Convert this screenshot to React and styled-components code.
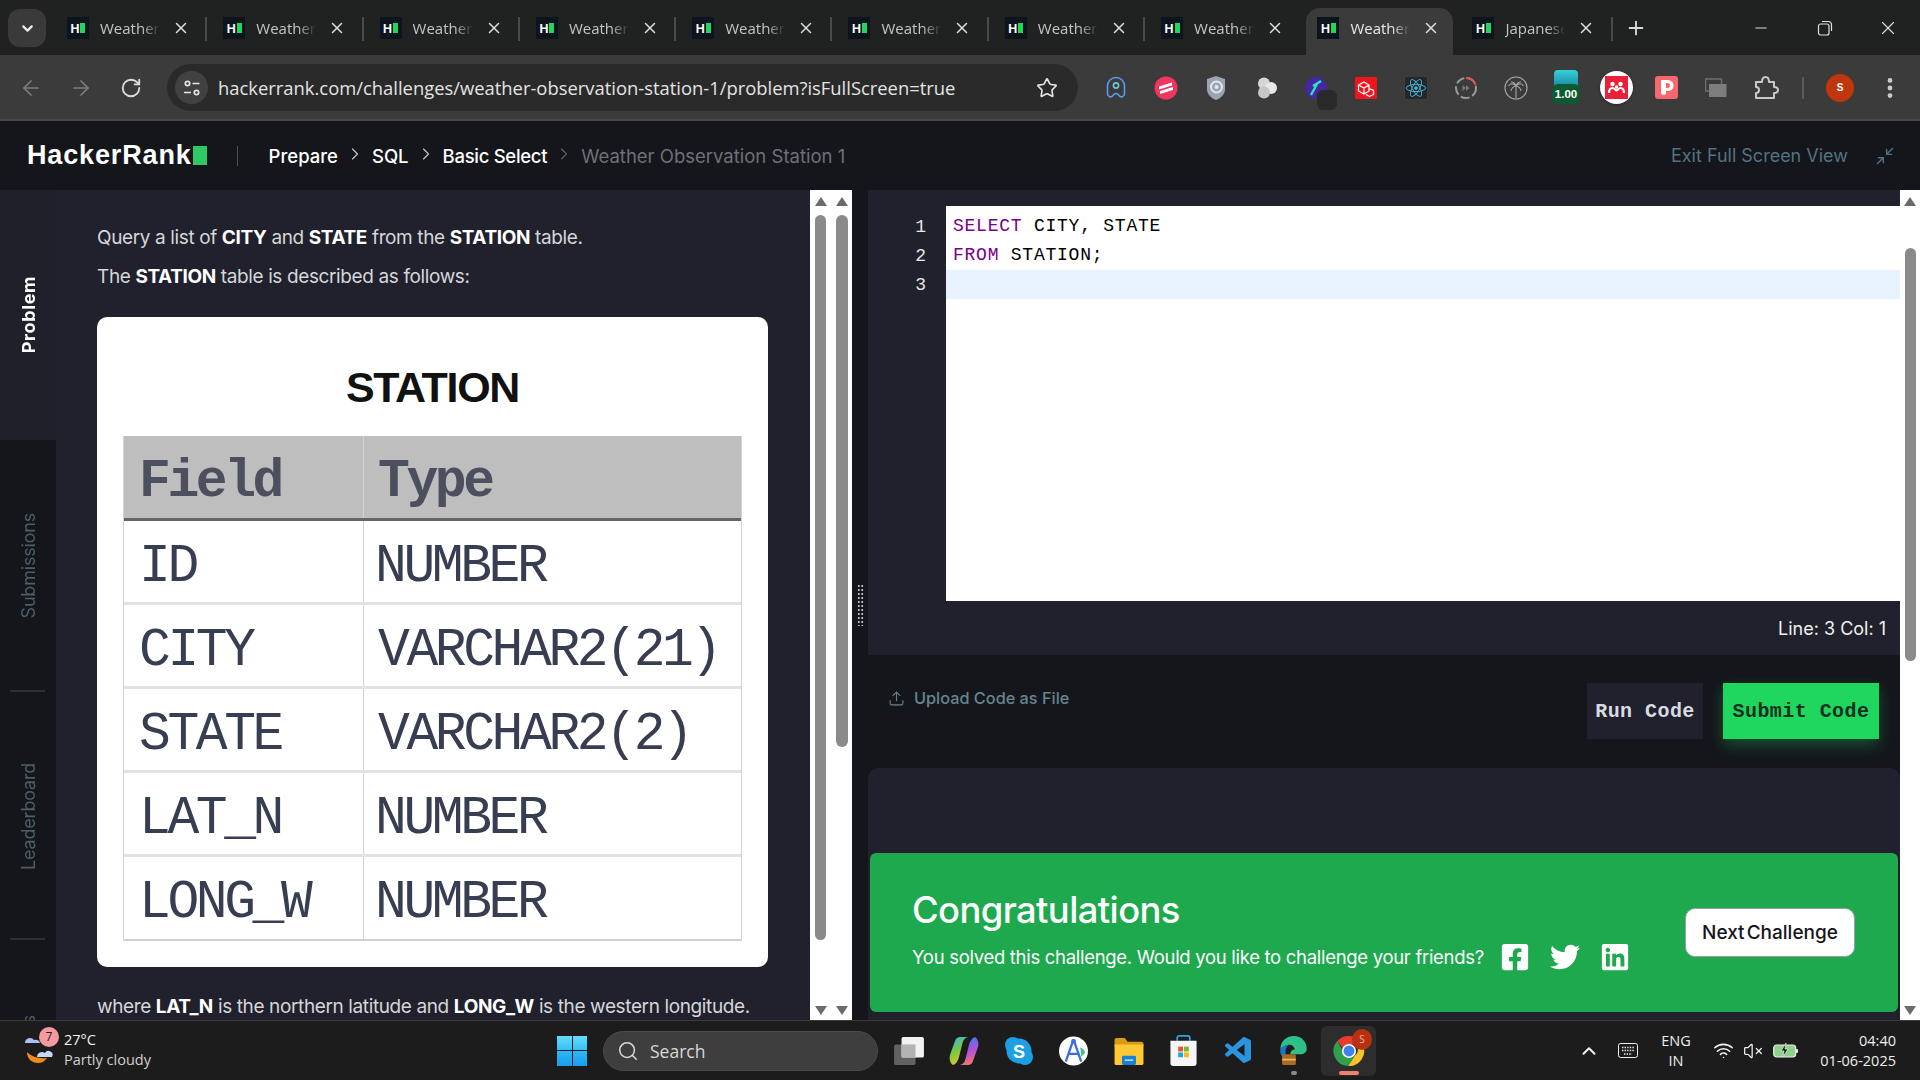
import React from 'react';
import styled, { createGlobalStyle } from 'styled-components';
import {
  ArrowLeft, ArrowRight, RotateCw, Star, X, Minus, Plus, ChevronDown, ChevronUp,
  ChevronRight, EllipsisVertical, Upload, Minimize2, Search as SearchIcon,
  Wifi, VolumeX,
} from 'lucide-react';
import { FaFacebookSquare, FaTwitter, FaLinkedin, FaReact } from 'react-icons/fa';
import { VscVscode } from 'react-icons/vsc';

const UI_FONT = '"Open Sans", "Noto Sans", sans-serif';
const PAGE_FONT = 'Inter, "Liberation Sans", sans-serif';
const MONO_FONT = '"Liberation Mono", "DejaVu Sans Mono", monospace';

const GlobalStyle = createGlobalStyle`
  html, body { margin: 0; padding: 0; background: #14161b; overflow: hidden; }
  * { box-sizing: border-box; }
`;

const Screen = styled.div`
  width: 1920px;
  height: 1080px;
  display: flex;
  flex-direction: column;
  overflow: hidden;
  font-family: ${PAGE_FONT};
`;

/* chrome tab strip */
const TabStrip = styled.div`
  height: 55px;
  flex: none;
  display: flex;
  align-items: flex-end;
  background: #202221;
  font-family: ${UI_FONT};
  color: #c9c9c9;
`;
const TabMenu = styled.div`
  width: 38px;
  height: 38px;
  margin: 9px 5px 0 8px;
  align-self: flex-start;
  border-radius: 12px;
  background: #3a3a3a;
  color: #eee;
  display: flex;
  align-items: center;
  justify-content: center;
`;
const Tab = styled.div`
  position: relative;
  width: ${(p) => p.$w}px;
  height: 47px;
  padding: 0 0 7px ${(p) => p.$pad}px;
  margin-right: ${(p) => p.$gap || 0}px;
  display: flex;
  align-items: center;
  flex: none;
  border-radius: 14px 14px 0 0;
  background: ${(p) => (p.$active ? '#3b3b3b' : 'transparent')};
  color: ${(p) => (p.$active ? '#e8e8e8' : '#c4c4c4')};
  &::after {
    content: '';
    display: ${(p) => (p.$sep ? 'block' : 'none')};
    position: absolute;
    right: 0;
    top: 9px;
    width: 2px;
    height: 24px;
    background: #4a4a4a;
  }
`;
const Favicon = styled.span`
  width: 22px;
  height: 22px;
  flex: none;
  background: #0e141e;
  display: flex;
  align-items: center;
  justify-content: center;
  gap: 1px;
  color: #fff;
  font: 700 12px ${PAGE_FONT};
`;
const FaviconBar = styled.i`
  width: 5px;
  height: 10px;
  background: #1ed760;
`;
const TabTitle = styled.span`
  width: 60px;
  margin-left: 11px;
  font-size: 15px;
  white-space: nowrap;
  overflow: hidden;
  -webkit-mask-image: linear-gradient(90deg, #000 70%, transparent 100%);
  mask-image: linear-gradient(90deg, #000 70%, transparent 100%);
`;
const TabClose = styled.span`
  margin-left: 12px;
  display: flex;
  color: #ddd;
`;
const NewTab = styled.div`
  margin-left: 12px;
  height: 47px;
  padding-bottom: 7px;
  display: flex;
  align-items: center;
  color: #ddd;
`;
const WindowControls = styled.div`
  margin-left: auto;
  height: 47px;
  padding-bottom: 7px;
  display: flex;
  align-items: center;
  color: #e0e0e0;
`;
const WindowButton = styled.div`
  width: 63.5px;
  display: flex;
  justify-content: center;
`;

/* chrome toolbar */
const Toolbar = styled.div`
  height: 66px;
  flex: none;
  display: flex;
  align-items: center;
  padding: 1px 0 0 6px;
  background: #3b3b3b;
  border-bottom: 2px solid #484848;
  font-family: ${UI_FONT};
`;
const NavButton = styled.div`
  width: 50px;
  display: flex;
  justify-content: center;
  color: ${(p) => (p.$on ? '#dcdcdc' : '#7c7c7c')};
`;
const AddressBar = styled.div`
  width: 911px;
  height: 47px;
  margin-left: 11px;
  padding: 0 20px 0 8px;
  display: flex;
  align-items: center;
  border-radius: 24px;
  background: #2a2a2a;
  color: #e4e4e4;
`;
const SiteButton = styled.div`
  width: 33px;
  height: 33px;
  border-radius: 50%;
  background: #414141;
  display: flex;
  align-items: center;
  justify-content: center;
  flex: none;
`;
const Url = styled.div`
  margin-left: 10px;
  font-size: 18.4px;
  white-space: nowrap;
  flex: 1;
`;
const Extensions = styled.div`
  margin-left: 13px;
  display: flex;
  align-items: center;
`;
const ExtSlot = styled.div`
  position: relative;
  width: 50px;
  height: 44px;
  display: flex;
  align-items: center;
  justify-content: center;
  flex: none;
`;
const ExtPatch = styled.span`
  position: absolute;
  left: 26px;
  top: 24px;
  width: 20px;
  height: 20px;
  border-radius: 6px;
  background: #2a2a2a;
`;
const RateBadge = styled.span`
  position: absolute;
  left: 11px;
  top: 18px;
  width: 28px;
  height: 20px;
  border-radius: 6px;
  background: #0d5a30;
  color: #fff;
  font: 700 11.5px/20px "Liberation Sans", sans-serif;
  text-align: center;
`;
const RateTop = styled.span`
  position: absolute;
  left: 13px;
  top: 4px;
  width: 24px;
  height: 16px;
  border-radius: 4px 4px 0 0;
  background: linear-gradient(#35d0d8, #1b8fa8);
`;
const Mendeley = styled.span`
  width: 33px;
  height: 33px;
  border-radius: 50%;
  background: #fff;
  box-shadow: 0 1px 3px rgba(0, 0, 0, 0.4);
  display: flex;
  align-items: center;
  justify-content: center;
`;
const ToolSep = styled.div`
  width: 2px;
  height: 22px;
  margin: 0 10px 0 11px;
  background: #5b5b5b;
`;
const Avatar = styled.div`
  width: 28px;
  height: 28px;
  margin: 0 8px 0 12px;
  border-radius: 50%;
  background: #bf360c;
  color: #fff;
  font: 700 10px/28px "Liberation Sans", sans-serif;
  text-align: center;
`;
const MoreButton = styled.div`
  margin-left: 15px;
  display: flex;
  color: #cfcfcf;
`;

/* hackerrank header */
const Header = styled.header`
  height: 69px;
  flex: none;
  display: flex;
  align-items: center;
  padding: 0 25px 0 27px;
  background: #14161b;
`;
const Logo = styled.div`
  display: flex;
  align-items: center;
  color: #fff;
  font: 700 27px "Liberation Sans", sans-serif;
  letter-spacing: 0.85px;
`;
const LogoBlock = styled.i`
  width: 14px;
  height: 19px;
  margin-left: 1px;
  background: #2ec866;
`;
const HeaderSep = styled.div`
  width: 1px;
  height: 20px;
  margin: 0 31px 0 30px;
  background: #4a4f57;
`;
const Crumbs = styled.nav`
  display: flex;
  align-items: center;
  font-size: 18.5px;
  color: #fff;
`;
const Crumb = styled.span`
  color: ${(p) => (p.$current ? '#6d7278' : '#fff')};
  font-weight: ${(p) => (p.$current ? 400 : 500)};
  letter-spacing: ${(p) => (p.$tight ? '-0.3px' : '0')};
`;
const CrumbArrow = styled.span`
  display: flex;
  width: 34px;
  justify-content: center;
  color: ${(p) => (p.$dim ? '#5d6268' : '#ccc')};
  margin-top: -3px;
`;
const ExitFull = styled.div`
  margin-left: auto;
  display: flex;
  align-items: center;
  gap: 27px;
  color: #537282;
  font-size: 18px;
`;

/* main area */
const Main = styled.main`
  flex: 1;
  min-height: 0;
  display: flex;
  overflow: hidden;
`;
const Sidebar = styled.aside`
  width: 56px;
  flex: none;
  background: #14161b;
  display: flex;
  flex-direction: column;
`;
const SideTab = styled.div`
  height: ${(p) => p.$h}px;
  flex: none;
  position: relative;
  display: flex;
  align-items: center;
  justify-content: center;
  background: ${(p) => (p.$active ? '#1f2029' : 'transparent')};
  &::after {
    content: '';
    position: absolute;
    left: 10px;
    bottom: 0;
    width: 35px;
    height: 2px;
    background: ${(p) => (p.$active ? 'transparent' : '#2b2f36')};
  }
`;
const SideLabel = styled.span`
  writing-mode: vertical-rl;
  transform: rotate(180deg);
  font-family: Inter, sans-serif;
  font-size: 18px;
  letter-spacing: ${(p) => (p.$active ? '0.6px' : '-0.2px')};
  white-space: nowrap;
  font-weight: ${(p) => (p.$active ? 700 : 400)};
  color: ${(p) => (p.$active ? '#fff' : '#4c5e66')};
`;
const Problem = styled.section`
  width: 754px;
  flex: none;
  padding: 36px 42px 0 41px;
  background: #20212c;
  color: #d5d6da;
  overflow: hidden;
  font-size: 19px;
  letter-spacing: -0.38px;
`;
const Para = styled.p`
  margin: 0 0 ${(p) => p.$gap}px;
  line-height: 24px;
  white-space: nowrap;
  b { color: #fff; font-weight: 700; }
`;
const ImageCard = styled.div`
  width: 671px;
  height: 650px;
  margin-bottom: 28px;
  padding: 0 26px;
  border-radius: 10px;
  background: #fff;
`;
const CardTitle = styled.div`
  height: 119px;
  padding-top: 44px;
  text-align: center;
  color: #111;
  font: 700 43px/52px "Liberation Sans", sans-serif;
  letter-spacing: -1.3px;
`;
const SchemaTable = styled.div`
  width: 619px;
  border-left: 1px solid #d4d4d4;
  border-right: 1px solid #d4d4d4;
  filter: blur(0.45px);
`;
const SchemaRow = styled.div`
  height: ${(p) => (p.$head ? 85 : 84)}px;
  display: grid;
  grid-template-columns: 240px 1fr;
  background: ${(p) => (p.$head ? '#bdbebd' : '#fff')};
  border-bottom: ${(p) => (p.$head ? '3px solid #666' : '3px solid #e2e2e2')};
  color: ${(p) => (p.$head ? '#4c505e' : '#383e52')};
  font-family: ${MONO_FONT};
  font-weight: ${(p) => (p.$head ? 700 : 400)};
  font-size: 53px;
  &:last-child { border-bottom-width: 2px; border-bottom-color: #d0d0d0; }
`;
const SchemaCell = styled.div`
  display: flex;
  align-items: center;
  padding: 10px 0 0 ${(p) => p.$pad}px;
  border-right: ${(p) => (p.$first ? '1px solid #d4d4d4' : '0')};
  letter-spacing: -3.4px;
  white-space: nowrap;
`;

/* scrollbars */
const ScrollPair = styled.div`
  width: 42px;
  flex: none;
  display: flex;
  background: #fff;
`;
const ScrollBar = styled.div`
  width: ${(p) => p.$w}px;
  flex: none;
  display: flex;
  flex-direction: column;
  align-items: center;
  background: #fff;
`;
const Arrow = styled.i`
  width: 0;
  height: 0;
  flex: none;
  border-left: 6px solid transparent;
  border-right: 6px solid transparent;
  ${(p) => (p.$down
    ? 'border-top: 9px solid #6a6a6a; margin: auto 0 5px;'
    : 'border-bottom: 9px solid #6a6a6a; margin-top: 7px;')}
`;
const Thumb = styled.div`
  width: ${(p) => p.$w}px;
  height: ${(p) => p.$h}px;
  margin-top: ${(p) => p.$top}px;
  border-radius: 6px;
  background: #8a8a8a;
  flex: none;
`;
const Splitter = styled.div`
  width: 16px;
  flex: none;
  background: #14161b;
  display: flex;
  align-items: center;
  justify-content: center;
`;
const Grip = styled.div`
  width: 7px;
  height: 42px;
  background-image: radial-gradient(circle, #bdbdbd 1.1px, transparent 1.3px);
  background-size: 3.5px 4px;
`;

/* right column */
const Workspace = styled.section`
  width: 1032px;
  flex: none;
  display: flex;
  flex-direction: column;
  background: #14161b;
`;
const EditorPanel = styled.div`
  height: 465px;
  flex: none;
  padding-top: 16px;
  background: #20212c;
`;
const EditorFrame = styled.div`
  height: 395px;
  display: flex;
`;
const Gutter = styled.div`
  width: 78px;
  flex: none;
  padding: 7px 20px 0 0;
  text-align: right;
  color: #e8e8e8;
  font: 400 18px/29.2px ${MONO_FONT};
`;
const Code = styled.div`
  flex: 1;
  padding-top: 5px;
  background: #fff;
  color: #000;
  font: 400 18px/31px ${MONO_FONT};
  letter-spacing: 0.76px;
`;
const CodeLine = styled.div`
  height: 29.3px;
  padding-left: 7px;
  white-space: pre;
  background: ${(p) => (p.$current ? '#e8f2ff' : 'transparent')};
`;
const Keyword = styled.span`
  color: #770088;
`;
const StatusLine = styled.div`
  height: 54px;
  padding: 0 14px 0 0;
  display: flex;
  align-items: center;
  justify-content: flex-end;
  color: #f0f0f0;
  font-size: 18px;
`;
const ActionBar = styled.div`
  height: 113px;
  flex: none;
  padding: 28px 21px 0 20px;
  display: flex;
  align-items: flex-start;
`;
const UploadLink = styled.div`
  display: flex;
  align-items: center;
  gap: 9px;
  height: 30px;
  color: #66858f;
  font-size: 16.3px;
  font-weight: 500;
`;
const CodeButton = styled.button`
  width: ${(p) => (p.$primary ? '156px' : '116px')};
  height: 56px;
  margin-left: ${(p) => (p.$primary ? '20px' : 'auto')};
  padding: 0;
  border: 0;
  background: ${(p) => (p.$primary ? '#1fd65f' : '#20212c')};
  color: ${(p) => (p.$primary ? '#16301f' : '#d8dbe2')};
  box-shadow: ${(p) => (p.$primary ? '0 6px 14px rgba(31, 214, 95, 0.3)' : 'none')};
  font: 700 20px ${MONO_FONT};
  letter-spacing: 0.45px;
`;
const ResultPanel = styled.div`
  flex: 1;
  padding: 85px 2px 8px 2px;
  border-radius: 10px 10px 0 0;
  background: #20212c;
`;
const SuccessCard = styled.div`
  height: 159px;
  padding: 0 43px 0 42px;
  display: flex;
  align-items: center;
  justify-content: space-between;
  border-radius: 6px;
  background: #1ea94e;
  color: #fff;
`;
const SuccessText = styled.div`
  padding-bottom: 5px;
`;
const SuccessTitle = styled.h2`
  margin: 0 0 10px;
  font-size: 36.4px;
  line-height: 44px;
  font-weight: 500;
  letter-spacing: -0.6px;
`;
const ShareRow = styled.div`
  display: flex;
  align-items: center;
  font-size: 18.5px;
  letter-spacing: -0.3px;
`;
const ShareIcons = styled.span`
  display: flex;
  align-items: center;
  gap: 20px;
  margin-left: 16px;
  font-size: 30px;
`;
const NextButton = styled.button`
  width: 170px;
  height: 49px;
  border: 1px solid #9aa0a6;
  border-radius: 10px;
  background: #fff;
  color: #14161b;
  font: 500 19px ${PAGE_FONT};
  word-spacing: -3px;
`;
const PageScroll = styled.div`
  width: 20px;
  flex: none;
  background: #fff;
  display: flex;
  flex-direction: column;
  align-items: center;
`;

/* windows taskbar */
const Taskbar = styled.footer`
  height: 60px;
  flex: none;
  display: flex;
  align-items: center;
  background: #1c1c1c;
  border-top: 1px solid #3b3b3b;
  font-family: ${UI_FONT};
  color: #eee;
`;
const Weather = styled.div`
  width: 557px;
  flex: none;
  padding: 0 0 2px 25px;
  display: flex;
  align-items: center;
  gap: 9px;
`;
const WeatherIcon = styled.div`
  position: relative;
  width: 30px;
  height: 40px;
  margin-top: 4px;
`;
const WeatherBadge = styled.span`
  position: absolute;
  left: 14px;
  top: -5px;
  width: 20px;
  height: 20px;
  border-radius: 50%;
  background: #f59a9e;
  color: #222;
  font-size: 12px;
  line-height: 20px;
  text-align: center;
`;
const WeatherText = styled.div`
  font-size: 14.5px;
  line-height: 20px;
  white-space: nowrap;
  color: #d0d0d0;
`;
const Temp = styled.div`
  color: #f2f2f2;
`;
const StartLogo = styled.div`
  width: 30px;
  height: 30px;
  flex: none;
  display: grid;
  grid-template-columns: 1fr 1fr;
  gap: 1px;
`;
const StartPane = styled.i`
  background: ${(p) => (p.$low ? 'linear-gradient(#2db7f5, #1a9df0)' : 'linear-gradient(#66dcfb, #35bff5)')};
`;
const SearchBox = styled.div`
  width: 275px;
  height: 40px;
  margin-left: 16px;
  padding-left: 13px;
  flex: none;
  display: flex;
  align-items: center;
  gap: 11px;
  border-radius: 20px;
  background: #3e3e3e;
  border: 1px solid #4a4a4a;
  color: #d8d8d8;
  font-size: 17.5px;
`;
const AppIcons = styled.div`
  margin-left: 3px;
  display: flex;
`;
const AppSlot = styled.div`
  position: relative;
  width: 55px;
  height: 50px;
  display: flex;
  align-items: center;
  justify-content: center;
  border-radius: 6px;
  background: ${(p) => (p.$active ? '#2d2d2d' : 'transparent')};
`;
const RunningMark = styled.i`
  position: absolute;
  left: 50%;
  bottom: 1px;
  height: 4px;
  width: ${(p) => (p.$active ? '20px' : '6px')};
  margin-left: ${(p) => (p.$active ? '-10px' : '-3px')};
  border-radius: 2px;
  background: ${(p) => (p.$active ? '#f08070' : '#8b8b8b')};
`;
const AppBadge = styled.span`
  position: absolute;
  left: 31px;
  top: 3px;
  width: 20px;
  height: 21px;
  border-radius: 50%;
  background: #b7300f;
  color: #f5b5a5;
  font-size: 10px;
  line-height: 21px;
  text-align: center;
`;
const Tray = styled.div`
  margin-left: auto;
  padding-right: 24px;
  display: flex;
  align-items: center;
`;
const TrayIcon = styled.span`
  width: ${(p) => p.$w}px;
  display: flex;
  justify-content: center;
  flex: none;
  color: #f0f0f0;
  svg { flex: none; }
`;
const TrayText = styled.div`
  width: ${(p) => p.$w}px;
  flex: none;
  font-size: 14.5px;
  line-height: 20px;
  text-align: ${(p) => p.$align};
`;

function HackerFavicon() {
  return <Favicon>H<FaviconBar /></Favicon>;
}

function ChromeTab({ title, ...rest }) {
  return (
    <Tab {...rest}>
      <HackerFavicon />
      <TabTitle>{title}</TabTitle>
      <TabClose><X size={18} /></TabClose>
    </Tab>
  );
}

function ChromeTabs() {
  return (
    <TabStrip>
      <TabMenu><ChevronDown size={17} strokeWidth={3} /></TabMenu>
      {Array.from({ length: 8 }, (_, i) => (
        <ChromeTab key={i} title="Weather" $w={156.3} $pad={16} $sep={i < 7} $gap={i === 7 ? 5 : 0} />
      ))}
      <ChromeTab title="Weather" $w={147} $pad={11} $active />
      <ChromeTab title="Japanese" $w={159.5} $pad={19} $sep />
      <NewTab><Plus size={22} /></NewTab>
      <WindowControls>
        <WindowButton><Minus size={18} strokeWidth={1.3} /></WindowButton>
        <WindowButton>
          <svg width="18" height="18" viewBox="0 0 18 18" fill="none" stroke="currentColor" strokeWidth="1.2">
            <rect x="2.5" y="5" width="10.5" height="11" rx="2" />
            <path d="M6 2.5h6.5a3 3 0 0 1 3 3V12" />
          </svg>
        </WindowButton>
        <WindowButton><X size={22} strokeWidth={1.2} /></WindowButton>
      </WindowControls>
    </TabStrip>
  );
}

function SiteIcon() {
  return (
    <svg width="18" height="18" viewBox="0 0 18 18" fill="none" stroke="#e4e4e4" strokeWidth="1.7">
      <circle cx="4.5" cy="4.5" r="2.2" />
      <path d="M9.5 4.5h7M1 13.5h7" />
      <circle cx="13.5" cy="13.5" r="2.2" />
    </svg>
  );
}

function ExtensionIcons() {
  return (
    <Extensions>
      <ExtSlot>
        <svg width="20" height="24" viewBox="0 0 20 24" fill="none" stroke="#5b9bea" strokeWidth="1.6">
          <path d="M1.5 18V10a8.5 8.5 0 0 1 17 0v8a3 3 0 0 1-5.5 1.5c-.8-1.3-1.6-2-3-2s-2.2.7-3 2A3 3 0 0 1 1.5 18z" />
          <circle cx="10" cy="9.5" r="2.6" stroke="#6fc3d8" />
        </svg>
      </ExtSlot>
      <ExtSlot>
        <svg width="24" height="24" viewBox="0 0 24 24">
          <circle cx="12" cy="12" r="11.5" fill="#f0365f" />
          <path d="M5 10.5 18 6.5v3L5 13.5zM6 15l13-4v3L6 18z" fill="#fff" />
        </svg>
      </ExtSlot>
      <ExtSlot>
        <svg width="20" height="26" viewBox="0 0 20 26">
          <path d="M10 1 19 4v10c0 5.5-4 9-9 11-5-2-9-5.5-9-11V4z" fill="#9aa3b2" />
          <circle cx="10.5" cy="12" r="5.5" fill="none" stroke="#e4e8ee" strokeWidth="2" />
          <circle cx="10.5" cy="12" r="2" fill="#e4e8ee" />
        </svg>
      </ExtSlot>
      <ExtSlot>
        <svg width="22" height="22" viewBox="0 0 22 22">
          <circle cx="9" cy="6.5" r="6" fill="#d6d6d6" />
          <circle cx="16" cy="11" r="6" fill="#e8e8e8" />
          <circle cx="9" cy="15.5" r="6" fill="#c6c6c6" />
        </svg>
      </ExtSlot>
      <ExtSlot>
        <svg width="22" height="22" viewBox="0 0 22 22">
          <circle cx="11" cy="11" r="11" fill="#4527a0" />
          <path d="M6 18 12 7M8 9l8-5" stroke="#2fe0c8" strokeWidth="2.4" fill="none" />
        </svg>
        <ExtPatch />
      </ExtSlot>
      <ExtSlot>
        <svg width="22" height="22" viewBox="0 0 22 22">
          <rect width="22" height="22" rx="2" fill="#f0141e" />
          <path d="M3.5 8 9 5l5 3v6l-5 3-5.5-3zM3.5 8 9 11l5-3M9 11v6M14 11.5l4.5 2v4l-4 2-3.5-2" fill="none" stroke="#fff" strokeWidth="1.2" />
        </svg>
      </ExtSlot>
      <ExtSlot>
        <svg width="22" height="22" viewBox="0 0 22 22"><rect width="22" height="22" rx="1" fill="#23272a" /></svg>
        <FaReact size={20} color="#4db6d8" style={{ position: 'absolute' }} />
      </ExtSlot>
      <ExtSlot>
        <svg width="22" height="22" viewBox="0 0 22 22" fill="none" strokeWidth="2">
          <circle cx="11" cy="11" r="10" stroke="#9a9a9a" strokeDasharray="9 3" />
          <path d="M11 1a10 10 0 0 1 9.5 7" stroke="#e2504c" />
          <path d="M7.5 8v6l3.5-3zM11 8v6l3.5-3z" fill="#777" stroke="none" />
        </svg>
      </ExtSlot>
      <ExtSlot>
        <svg width="24" height="24" viewBox="0 0 24 24" fill="none" stroke="#a8a8a8" strokeWidth="1.1">
          <circle cx="12" cy="12" r="11" />
          <path d="M12 11v11M12 10C9 7 6 7 4.5 10M12 10c3-3 6-3 7.5 0M12 10c-2.5.5-4.5 2-5 5M12 10c2.5.5 4.5 2 5 5M12 10c-1-3-3-4-5-4M12 10c1-3 3-4 5-4" />
        </svg>
      </ExtSlot>
      <ExtSlot>
        <RateTop />
        <RateBadge>1.00</RateBadge>
      </ExtSlot>
      <ExtSlot>
        <Mendeley>
          <svg width="23" height="23" viewBox="0 0 23 23">
            <rect width="23" height="23" fill="#e8203a" />
            <circle cx="7.5" cy="8" r="2.2" fill="#fff" />
            <circle cx="15.5" cy="8" r="2.2" fill="#fff" />
            <circle cx="11.5" cy="11" r="1.7" fill="#fff" />
            <path d="M4 17c0-3 1-5 3.5-5 2 0 3 2.5 4 2.5s2-2.5 4-2.5c2.5 0 3.5 2 3.5 5" fill="none" stroke="#fff" strokeWidth="2.2" />
          </svg>
        </Mendeley>
      </ExtSlot>
      <ExtSlot>
        <svg width="23" height="23" viewBox="0 0 23 23">
          <rect width="23" height="23" rx="3" fill="#f8676e" />
          <path d="M6 4h7a5 5 0 0 1 0 11h-2v3l-2 1-3-1zM11 7v5h1.5a2.5 2.5 0 0 0 0-5z" fill="#fff" fillRule="evenodd" />
        </svg>
      </ExtSlot>
      <ExtSlot>
        <svg width="22" height="20" viewBox="0 0 22 20">
          <rect x="0.5" y="1" width="16" height="12" fill="none" stroke="#6f6f6f" strokeWidth="1.5" />
          <rect x="4" y="6" width="17.5" height="13" fill="#7d7d7d" />
        </svg>
      </ExtSlot>
      <ExtSlot>
        <svg width="26" height="26" viewBox="0 0 26 26" fill="none" stroke="#c9c9c9" strokeWidth="2" strokeLinejoin="round">
          <path d="M3 7h6c0-3 1-5 3.5-5S16 4 16 7h5v5c2.5 0 4 1 4 3s-1.5 3-4 3v5H3v-5c2 0 3-1 3-3s-1-3-3-3z" />
        </svg>
      </ExtSlot>
      <ToolSep />
      <Avatar>S</Avatar>
      <MoreButton><EllipsisVertical size={26} strokeWidth={2.4} /></MoreButton>
    </Extensions>
  );
}

function BrowserToolbar() {
  return (
    <Toolbar>
      <NavButton><ArrowLeft size={24} strokeWidth={1.7} /></NavButton>
      <NavButton><ArrowRight size={24} strokeWidth={1.7} /></NavButton>
      <NavButton $on><RotateCw size={22} strokeWidth={2} /></NavButton>
      <AddressBar>
        <SiteButton><SiteIcon /></SiteButton>
        <Url>hackerrank.com/challenges/weather-observation-station-1/problem?isFullScreen=true</Url>
        <Star size={22} strokeWidth={1.8} />
      </AddressBar>
      <ExtensionIcons />
    </Toolbar>
  );
}

function PageHeader() {
  return (
    <Header>
      <Logo>HackerRank<LogoBlock /></Logo>
      <HeaderSep />
      <Crumbs>
        <Crumb>Prepare</Crumb>
        <CrumbArrow><ChevronRight size={20} strokeWidth={1.3} /></CrumbArrow>
        <Crumb>SQL</Crumb>
        <CrumbArrow><ChevronRight size={20} strokeWidth={1.3} /></CrumbArrow>
        <Crumb $tight>Basic Select</Crumb>
        <CrumbArrow $dim><ChevronRight size={20} strokeWidth={1.3} /></CrumbArrow>
        <Crumb $current>Weather Observation Station 1</Crumb>
      </Crumbs>
      <ExitFull>
        Exit Full Screen View
        <Minimize2 size={20} strokeWidth={1.7} />
      </ExitFull>
    </Header>
  );
}

const schema = [
  ['ID', 'NUMBER', 11],
  ['CITY', 'VARCHAR2(21)', 14],
  ['STATE', 'VARCHAR2(2)', 14],
  ['LAT_N', 'NUMBER', 11],
  ['LONG_W', 'NUMBER', 11],
];

function ProblemStatement() {
  return (
    <Problem>
      <Para $gap={15}>Query a list of <b>CITY</b> and <b>STATE</b> from the <b>STATION</b> table.</Para>
      <Para $gap={28}>The <b>STATION</b> table is described as follows:</Para>
      <ImageCard>
        <CardTitle>STATION</CardTitle>
        <SchemaTable>
          <SchemaRow $head>
            <SchemaCell $first $pad={15}>Field</SchemaCell>
            <SchemaCell $pad={14}>Type</SchemaCell>
          </SchemaRow>
          {schema.map(([field, type, pad]) => (
            <SchemaRow key={field}>
              <SchemaCell $first $pad={15}>{field}</SchemaCell>
              <SchemaCell $pad={pad}>{type}</SchemaCell>
            </SchemaRow>
          ))}
        </SchemaTable>
      </ImageCard>
      <Para $gap={0}>where <b>LAT_N</b> is the northern latitude and <b>LONG_W</b> is the western longitude.</Para>
    </Problem>
  );
}

function EditorArea() {
  return (
    <Workspace>
      <EditorPanel>
        <EditorFrame>
          <Gutter>1<br />2<br />3</Gutter>
          <Code>
            <CodeLine><Keyword>SELECT</Keyword> CITY, STATE</CodeLine>
            <CodeLine><Keyword>FROM</Keyword> STATION;</CodeLine>
            <CodeLine $current />
          </Code>
        </EditorFrame>
        <StatusLine>Line: 3 Col: 1</StatusLine>
      </EditorPanel>
      <ActionBar>
        <UploadLink><Upload size={17} strokeWidth={1.5} />Upload Code as File</UploadLink>
        <CodeButton>Run Code</CodeButton>
        <CodeButton $primary>Submit Code</CodeButton>
      </ActionBar>
      <ResultPanel>
        <SuccessCard>
          <SuccessText>
            <SuccessTitle>Congratulations</SuccessTitle>
            <ShareRow>
              You solved this challenge. Would you like to challenge your friends?
              <ShareIcons><FaFacebookSquare /><FaTwitter /><FaLinkedin /></ShareIcons>
            </ShareRow>
          </SuccessText>
          <NextButton>Next Challenge</NextButton>
        </SuccessCard>
      </ResultPanel>
    </Workspace>
  );
}

function ChromeIcon() {
  return (
    <svg width="32" height="32" viewBox="0 0 34 34">
      <path d="M17 1a16 16 0 0 1 14.5 9H17a7 7 0 0 0-6.5 4L4.5 6.5A16 16 0 0 1 17 1z" fill="#e53d30" />
      <path d="M31.5 10A16 16 0 0 1 16 33l7-11a7 7 0 0 0 0-12z" fill="#f9c227" />
      <path d="M4.5 6.5l6.500 11A7 7 0 0 0 23 22l-7 11A16 16 0 0 1 4.5 6.5z" fill="#2fa04c" />
      <circle cx="17" cy="17" r="7.5" fill="#fff" />
      <circle cx="17" cy="17" r="5.8" fill="#3c82e8" />
    </svg>
  );
}

function TaskbarApps() {
  return (
    <AppIcons>
      <AppSlot>
        <svg width="30" height="28" viewBox="0 0 32 30">
          <rect y="8" width="23" height="22" rx="2" fill="#616161" />
          <rect x="8" width="24" height="22" rx="2" fill="#f2f2f2" />
          <rect x="8" y="8" width="15" height="14" fill="#b3b3b3" />
        </svg>
      </AppSlot>
      <AppSlot>
        <svg width="30" height="30" viewBox="0 0 30 30">
          <defs>
            <linearGradient id="copA" x1="0.2" y1="0" x2="0.6" y2="1">
              <stop offset="0" stopColor="#2fb8e8" /><stop offset="0.5" stopColor="#7ec83c" /><stop offset="1" stopColor="#f2c230" />
            </linearGradient>
            <linearGradient id="copB" x1="0.4" y1="0" x2="0.6" y2="1">
              <stop offset="0" stopColor="#3c7ae8" /><stop offset="0.5" stopColor="#b64ee0" /><stop offset="1" stopColor="#f47a5c" />
            </linearGradient>
          </defs>
          <path d="M11 1h8c-4 1-5 4-6 8l-3 12c-1 4-3 7-6 8C1 27 0 23 1 19L6 5c1-3 3-4 5-4z" fill="url(#copA)" />
          <path d="M19 29h-8c4-1 5-4 6-8l3-12c1-4 3-7 6-8 3 2 4 6 3 10l-5 14c-1 3-3 4-5 4z" fill="url(#copB)" />
        </svg>
      </AppSlot>
      <AppSlot>
        <svg width="28" height="28" viewBox="0 0 28 28">
          <circle cx="8" cy="8" r="8" fill="#1d9fe2" />
          <circle cx="20" cy="20" r="8" fill="#1d9fe2" />
          <circle cx="14" cy="14" r="12.5" fill="#1d9fe2" />
          <text x="14" y="20.5" textAnchor="middle" fill="#fff" fontFamily="Liberation Sans, sans-serif" fontWeight="700" fontSize="18">S</text>
        </svg>
      </AppSlot>
      <AppSlot>
        <svg width="29" height="30" viewBox="0 0 30 30">
          <circle cx="15" cy="15" r="15" fill="#fff" />
          <path d="M15 3 7 26M15 3l8 23M9 18h12" stroke="#3b6fe0" strokeWidth="2.4" fill="none" />
          <circle cx="15" cy="5" r="2.5" fill="#3b6fe0" />
          <path d="M22 11a8 8 0 0 1 5 6l-4 4z" fill="#4cc07a" />
        </svg>
      </AppSlot>
      <AppSlot>
        <svg width="30" height="28" viewBox="0 0 31 30">
          <path d="M0 3a2 2 0 0 1 2-2h9l3 4h15a2 2 0 0 1 2 2v3H0z" fill="#d99b12" />
          <path d="M0 8h31v20a2 2 0 0 1-2 2H2a2 2 0 0 1-2-2z" fill="#fcc934" />
          <rect x="8" y="20" width="15" height="10" rx="1.5" fill="#1a7fd1" />
          <rect x="11" y="24" width="9" height="1.6" fill="#bfe0f7" />
        </svg>
      </AppSlot>
      <AppSlot>
        <svg width="29" height="31" viewBox="0 0 29 32">
          <path d="M8 6V3a2 2 0 0 1 2-2h9a2 2 0 0 1 2 2v3" fill="none" stroke="#2aa6e8" strokeWidth="1.8" />
          <path d="M1 6h27v23a3 3 0 0 1-3 3H4a3 3 0 0 1-3-3z" fill="#f5f5f5" />
          <rect x="9" y="12" width="5" height="5" fill="#e8562a" /><rect x="15" y="12" width="5" height="5" fill="#7db82a" />
          <rect x="9" y="18" width="5" height="5" fill="#1da4e8" /><rect x="15" y="18" width="5" height="5" fill="#fdb813" />
        </svg>
      </AppSlot>
      <AppSlot><VscVscode size={32} color="#2b94e0" /></AppSlot>
      <AppSlot>
        <svg width="29" height="31" viewBox="0 0 31 34">
          <path d="M1 15C2 6 8 1 16 1c8 0 14 6 14 14 0 4-3 6-7 6H12c0-3 2-5 5-5-1-4-4-6-8-5-4 1-6 3-8 4z" fill="#2fc08a" />
          <path d="M1 15c2-2 5-4 9-4-4 3-5 11 1 17-6-1-11-6-10-13z" fill="#1776d1" />
          <rect x="3" y="21" width="15" height="12" rx="1.5" fill="#a86a24" />
          <rect x="3" y="26" width="15" height="2" fill="#e8b45c" />
        </svg>
        <RunningMark />
      </AppSlot>
      <AppSlot $active>
        <ChromeIcon />
        <AppBadge>S</AppBadge>
        <RunningMark $active />
      </AppSlot>
    </AppIcons>
  );
}

function SystemTray() {
  return (
    <Tray>
      <TrayIcon $w={28}><ChevronUp size={22} strokeWidth={2.2} /></TrayIcon>
      <TrayIcon $w={50}>
        <svg width="20" height="15" viewBox="0 0 20 15" fill="none" stroke="currentColor" strokeWidth="1">
          <rect x="0.5" y="0.5" width="19" height="14" rx="2" />
          <path d="M4 4.5h12M4 7.5h12M6 11h8" strokeDasharray="1.4 1.2" strokeWidth="1.4" />
        </svg>
      </TrayIcon>
      <TrayText $w={46} $align="center">ENG<br />IN</TrayText>
      <TrayIcon $w={48}><Wifi size={21} strokeWidth={1.8} /></TrayIcon>
      <TrayIcon $w={12}><VolumeX size={20} strokeWidth={1.5} /></TrayIcon>
      <TrayIcon $w={52}>
        <svg width="25" height="15" viewBox="0 0 25 15">
          <rect x="0.7" y="2" width="22" height="12" rx="3" fill="#8fd18b" stroke="#eee" strokeWidth="1.2" />
          <rect x="23" y="6" width="2" height="4" rx="1" fill="#eee" />
          <path d="M13 0 8 8h3l-1 6 5-8h-3z" fill="#1c1c1c" stroke="#eee" strokeWidth="0.7" />
        </svg>
      </TrayIcon>
      <TrayText $w={85} $align="right">04:40<br />01-06-2025</TrayText>
    </Tray>
  );
}

function Windows() {
  return (
    <Taskbar>
      <Weather>
        <WeatherIcon>
          <svg width="30" height="32" viewBox="0 0 30 32">
            <path d="M0 11a5 5 0 0 1 9-3 5 5 0 0 1 6 3z" fill="#a8c4ee" />
            <path d="M2 20c0 7 5 11 11 11 4 0 7-2 9-5-8 1-15-1-20-6z" fill="#f08a1d" />
            <path d="M12 25a5 5 0 0 1 8-4 4 4 0 0 1 7 4z" fill="#c8d8f2" />
          </svg>
          <WeatherBadge>7</WeatherBadge>
        </WeatherIcon>
        <WeatherText><Temp>27°C</Temp>Partly cloudy</WeatherText>
      </Weather>
      <StartLogo>
        <StartPane /><StartPane /><StartPane $low /><StartPane $low />
      </StartLogo>
      <SearchBox><SearchIcon size={22} strokeWidth={1.7} />Search</SearchBox>
      <TaskbarApps />
      <SystemTray />
    </Taskbar>
  );
}

export default function App() {
  return (
    <Screen>
      <GlobalStyle />
      <ChromeTabs />
      <BrowserToolbar />
      <PageHeader />
      <Main>
        <Sidebar>
          <SideTab $h={250} $active><SideLabel $active>Problem</SideLabel></SideTab>
          <SideTab $h={252}><SideLabel>Submissions</SideLabel></SideTab>
          <SideTab $h={248}><SideLabel>Leaderboard</SideLabel></SideTab>
          <SideTab $h={250}><SideLabel>Discussions</SideLabel></SideTab>
        </Sidebar>
        <ProblemStatement />
        <ScrollPair>
          <ScrollBar $w={21}>
            <Arrow />
            <Thumb $w={11} $h={725} $top={9} />
            <Arrow $down />
          </ScrollBar>
          <ScrollBar $w={21}>
            <Arrow />
            <Thumb $w={12} $h={532} $top={9} />
            <Arrow $down />
          </ScrollBar>
        </ScrollPair>
        <Splitter><Grip /></Splitter>
        <EditorArea />
        <PageScroll>
          <Arrow />
          <Thumb $w={11} $h={413} $top={42} />
          <Arrow $down />
        </PageScroll>
      </Main>
      <Windows />
    </Screen>
  );
}
